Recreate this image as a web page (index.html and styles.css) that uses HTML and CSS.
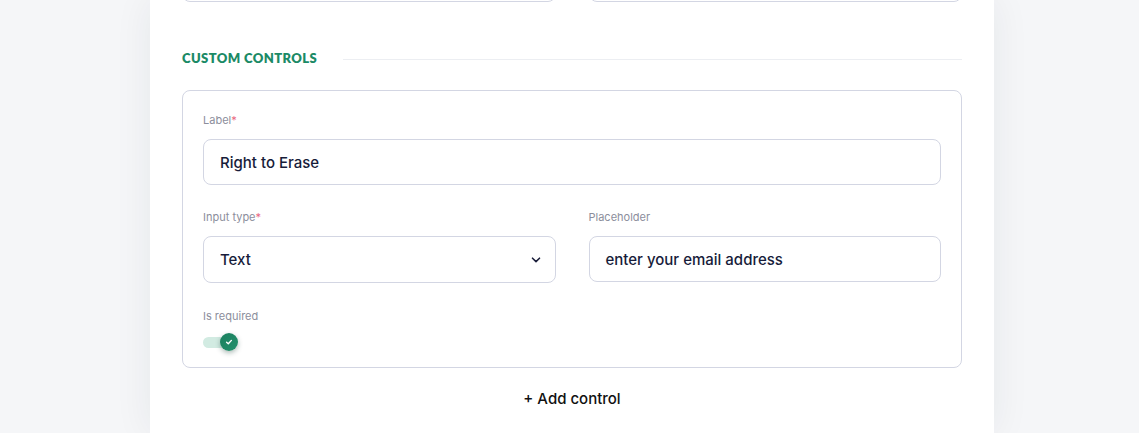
FILE: index.html
```html
<!DOCTYPE html>
<html lang="en">
<head>
<meta charset="utf-8">
<title>Custom controls</title>
<link rel="stylesheet" href="styles.css">
</head>
<body>
<div class="page">
  <div class="card">
    <div class="row top-row">
      <div class="input"></div>
      <div class="input"></div>
    </div>

    <div class="section-head">
      <h3 class="section-title">CUSTOM CONTROLS</h3>
      <div class="section-rule"></div>
    </div>

    <div class="control-box">
      <div class="field">
        <label class="field-label">Label<span class="req">*</span></label>
        <div class="input">Right to Erase</div>
      </div>

      <div class="row">
        <div class="field">
          <label class="field-label">Input type<span class="req">*</span></label>
          <div class="input select">
            <span>Text</span>
            <svg class="chev" width="10" height="6" viewBox="0 0 10 6"><path d="M1.5 1.2 L5 4.6 L8.5 1.2" fill="none" stroke="#1b1f3b" stroke-width="1.6" stroke-linecap="round" stroke-linejoin="round"/></svg>
          </div>
        </div>
        <div class="field">
          <label class="field-label">Placeholder</label>
          <div class="input">enter your email address</div>
        </div>
      </div>

      <div class="field last">
        <label class="field-label">Is required</label>
        <div class="toggle">
          <div class="track"></div>
          <div class="knob">
            <svg width="10" height="10" viewBox="0 0 10 10"><path d="M2.6 5.2 L4.3 6.8 L7.4 3.4" fill="none" stroke="#fff" stroke-width="1.4" stroke-linecap="round" stroke-linejoin="round"/></svg>
          </div>
        </div>
      </div>
    </div>

    <div class="add-control">+ Add control</div>
  </div>
</div>
</body>
</html>
```

FILE: styles.css
```css
* { box-sizing: border-box; }
html, body { margin: 0; padding: 0; }
body {
  background: #f5f6f8;
  font-family: "Inter", "Lato", sans-serif;
  height: 433px;
  overflow: hidden;
}
.page {
  display: flex;
  justify-content: flex-start;
  padding-left: 150px;
}
.card {
  width: 844px;
  background: #ffffff;
  padding: 0 32px 24px;
  box-shadow: 0 0 36px rgba(30, 40, 60, 0.07);
}
.row {
  display: grid;
  grid-template-columns: 1fr 1fr;
  column-gap: 33px;
}
.top-row {
  margin-top: -44px;
}
.input {
  height: 46px;
  border: 1px solid #d3d6e3;
  border-radius: 8px;
  padding: 0 16px;
  display: flex;
  align-items: center;
  font-size: 15px;
  font-weight: 500;
  color: #171c3a;
  background: #fff;
}
.select {
  height: 47px;
  justify-content: space-between;
}
.chev { margin-right: -2px; }
.section-head {
  display: flex;
  align-items: center;
  margin-top: 48px;
  gap: 26px;
}
.section-title {
  margin: 0;
  font-family: "Lato", sans-serif;
  font-size: 13px;
  line-height: 16px;
  font-weight: 800;
  letter-spacing: 0.4px;
  color: #1b8a66;
  white-space: nowrap;
}
.section-rule {
  flex: 1;
  height: 1px;
  background: #eceef2;
  margin-top: 2px;
}
.control-box {
  margin-top: 24px;
  border: 1px solid #d3d6e3;
  border-radius: 8px;
  padding: 22px 20px 15px;
}
.field {
  display: flex;
  flex-direction: column;
}
.field + .row {
  margin-top: 25px;
}
.row + .field {
  margin-top: 26px;
}
.field-label {
  font-size: 11px;
  line-height: 14px;
  color: #8c8e9c;
  margin-bottom: 12px;
}
.req { color: #e9677f; }
.last .field-label { margin-bottom: 9px; }
.toggle {
  position: relative;
  width: 36px;
  height: 20px;
}
.track {
  position: absolute;
  left: 0;
  top: 5px;
  width: 30px;
  height: 11px;
  border-radius: 6px;
  background: #d2ebe2;
}
.knob {
  position: absolute;
  left: 17px;
  top: 1px;
  width: 18px;
  height: 18px;
  border-radius: 50%;
  background: linear-gradient(135deg, #1a7f5e, #23906c);
  box-shadow: 0 2px 5px rgba(20, 60, 50, 0.35);
  display: flex;
  align-items: center;
  justify-content: center;
}
.add-control {
  margin-top: 21px;
  text-align: center;
  font-size: 15px;
  line-height: 20px;
  font-weight: 500;
  color: #111;
}
```
